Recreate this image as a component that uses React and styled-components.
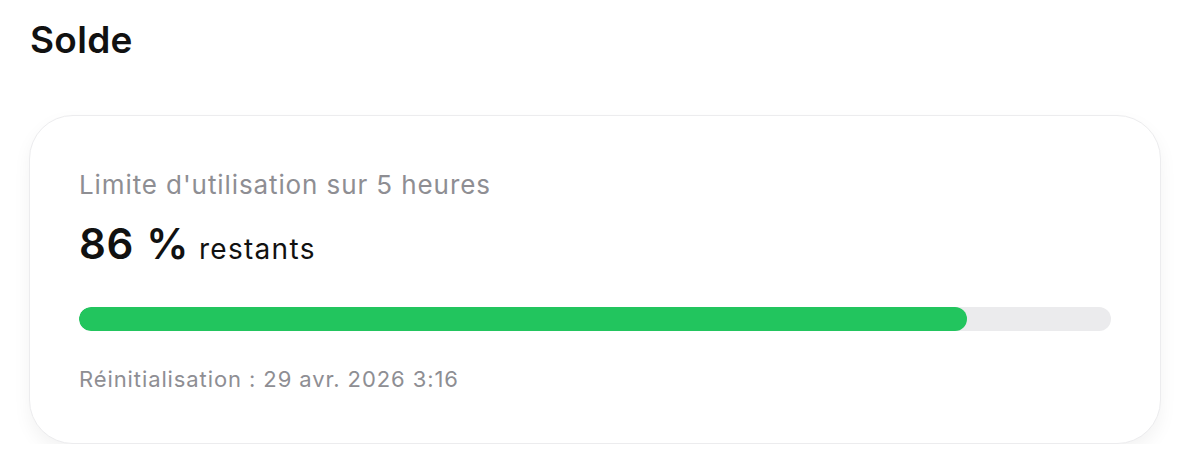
import React from "react";
import styled, { createGlobalStyle } from "styled-components";

const GlobalStyle = createGlobalStyle`
  body {
    margin: 0;
    background: #ffffff;
    font-family: Inter, "Noto Sans", sans-serif;
    color: #111111;
  }
`;

const usage = {
  label: "Limite d'utilisation sur 5 heures",
  remaining: 86,
  reset: "Réinitialisation : 29 avr. 2026 3:16",
};

function App() {
  return (
    <>
      <GlobalStyle />
      <StPage>
        <StTitle>Solde</StTitle>
        <StCard>
          <StLabel>{usage.label}</StLabel>
          <StValueRow>
            <StPercent>{usage.remaining} %</StPercent>
            <StSuffix>restants</StSuffix>
          </StValueRow>
          <StTrack>
            <StFill style={{ width: `${usage.remaining}%` }} />
          </StTrack>
          <StFooter>{usage.reset}</StFooter>
        </StCard>
      </StPage>
    </>
  );
}

export default App;

const StPage = styled.div`
  padding: 18px 19px 0 29px;
  display: flex;
  flex-direction: column;
`;

const StTitle = styled.h1`
  margin: 0 0 53px 1px;
  font-size: 37px;
  line-height: 44px;
  font-weight: 600;
  letter-spacing: 0.3px;
  color: #111111;
`;

const StCard = styled.div`
  box-sizing: border-box;
  width: 1132px;
  height: 329px;
  padding: 53px 49px 0 49px;
  border: 1px solid #ececee;
  border-radius: 44px;
  background: #ffffff;
  box-shadow: 0 8px 18px rgba(0, 0, 0, 0.05);
  display: flex;
  flex-direction: column;
`;

const StLabel = styled.div`
  font-size: 26px;
  line-height: 32px;
  letter-spacing: 0.9px;
  color: #8e8e93;
`;

const StValueRow = styled.div`
  margin-top: 18px;
  display: flex;
  align-items: baseline;
  gap: 10px;
  line-height: 50px;
`;

const StPercent = styled.span`
  font-size: 42px;
  font-weight: 600;
  letter-spacing: 0.6px;
  word-spacing: 1px;
  color: #111111;
`;

const StSuffix = styled.span`
  font-size: 28px;
  letter-spacing: 1.3px;
  color: #111111;
`;

const StTrack = styled.div`
  margin-top: 33px;
  height: 24px;
  border-radius: 12px;
  background: #ebebed;
  overflow: hidden;
`;

const StFill = styled.div`
  height: 100%;
  border-radius: 12px;
  background: #22c55e;
`;

const StFooter = styled.div`
  margin-top: 35px;
  font-size: 22px;
  line-height: 26px;
  letter-spacing: 0.9px;
  color: #8e8e93;
`;
